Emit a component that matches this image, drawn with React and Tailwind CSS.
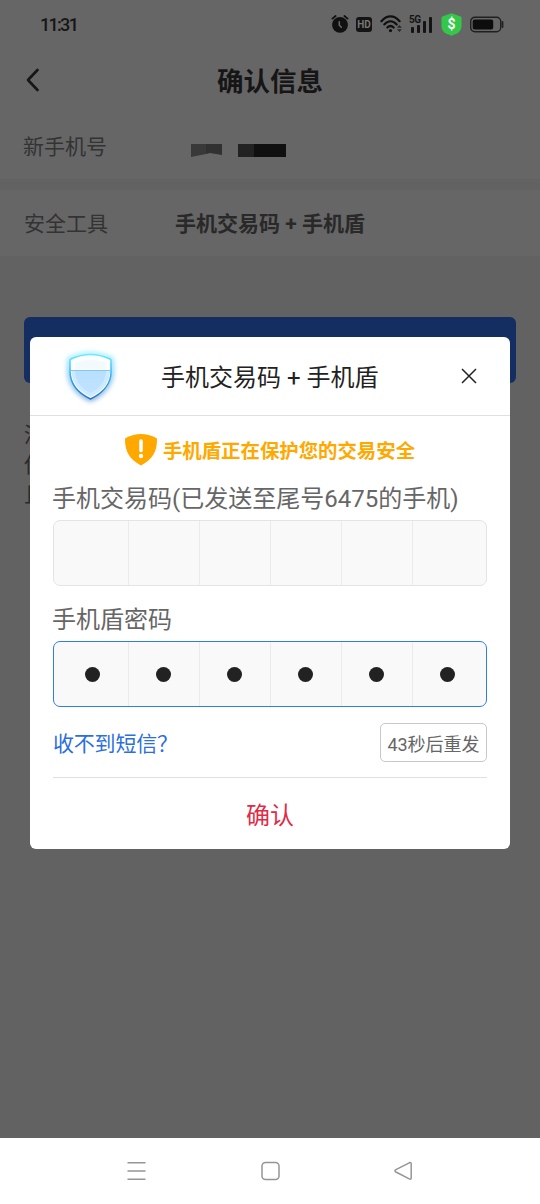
import React from 'react';

const SIGNAL_BARS = [
  'h-[6px]',
  'h-[8px]',
  'h-[12px]',
  'h-[16px]',
];

function AlarmIcon() {
  return (
    <svg className="h-[18px] w-[18px]" viewBox="0 0 18 18" fill="none">
      <circle cx="9" cy="9.8" r="7.9" fill="#101010" />
      <path d="M1.4 3.6 4.6 1M16.6 3.6 13.400 1" stroke="#101010" strokeWidth="1.800" strokeLinecap="round" />
      <path d="M8.300 6.800v3.400l2 2" stroke="#666" strokeWidth="1.600" strokeLinecap="round" />
    </svg>
  );
}

function WifiIcon() {
  return (
    <svg className="h-[18px] w-[23px]" viewBox="0 0 23 18" fill="none" stroke="#101010" strokeWidth="2.200" strokeLinecap="round">
      <path d="M1.400 6.200C7-.200 14-.200 19.600 6.200" />
      <path d="M4.300 9.400c3.800-4.200 8.600-4.200 12.400 0" />
      <path d="M7.300 12.500c2.100-2 4.300-2 6.400 0" />
      <circle cx="10.500" cy="15.600" r="1.600" fill="#101010" stroke="none" />
      <path d="m17 12.800 2.400-2.800 2.400 2.800ZM17 14.200l2.400 2.800 2.400-2.800Z" fill="#282828" stroke="none" />
    </svg>
  );
}

function GreenShieldIcon() {
  return (
    <svg className="h-[23px] w-[21px]" viewBox="0 0 21 23">
      <path d="M10.500.3 19.600 3.600q.9.400.9 1.400v8.200c0 3.600-2 5.600-4.600 7.300l-5.400 2.300-5.400-2.300C2.500 18.800.5 16.800.5 13.200V5q0-1 .9-1.400Z" fill="#34c84a" />
      <text x="10.500" y="16.300" textAnchor="middle" fontFamily="Roboto" fontWeight="700" fontSize="14" fill="#fff">$</text>
    </svg>
  );
}

function BatteryIcon() {
  return (
    <svg className="h-[17px] w-[35px]" viewBox="0 0 35 17" fill="none">
      <rect x=".7" y="1.200" width="30" height="14.600" rx="4.200" stroke="#202020" strokeWidth="1.400" />
      <rect x="2.700" y="3.400" width="20.500" height="10.200" rx="2" fill="#0d0d0d" />
      <path d="M32.500 6v5" stroke="#202020" strokeWidth="1.800" strokeLinecap="round" />
    </svg>
  );
}

function StatusBar() {
  return (
    <div className="flex h-[48px] items-center justify-between pl-[40px] pr-[35px]">
      <span className="font-['Roboto',sans-serif] text-[18px] font-medium tracking-[-1.7px] text-[#161616]">11:31</span>
      <div className="flex items-center">
        <AlarmIcon />
        <span className="ml-[7px] flex h-[15px] w-[16px] items-center justify-center rounded-[3px] bg-[#141414] font-['Roboto',sans-serif] text-[10px] font-bold text-[#777]">
          HD
        </span>
        <div className="ml-[8px]">
          <WifiIcon />
        </div>
        <div className="relative ml-[7px] mr-[1px] flex h-[17px] w-[22px] items-end justify-end gap-[3px]">
          <span className="absolute -left-[1px] -top-[1px] font-['Roboto',sans-serif] text-[10px] leading-[10px] font-bold tracking-[-0.5px] text-[#141414]">5G</span>
          {SIGNAL_BARS.map((height) => (
            <span key={height} className={`w-[3px] rounded-[1px] bg-[#141414] ${height}`} />
          ))}
        </div>
        <div className="ml-[8px]">
          <GreenShieldIcon />
        </div>
        <div className="ml-[8px]">
          <BatteryIcon />
        </div>
      </div>
    </div>
  );
}

function DialogShield() {
  return (
    <svg className="h-[62px] w-[62px]" viewBox="0 0 62 62" fill="none">
      <defs>
        <filter id="glow" x="-30%" y="-30%" width="160%" height="160%">
          <feGaussianBlur stdDeviation="2.600" />
        </filter>
        <linearGradient id="edge" x1="0" y1="0" x2="0" y2="1">
          <stop offset="0" stopColor="#6ce8ff" />
          <stop offset=".4" stopColor="#3cb5f2" />
          <stop offset="1" stopColor="#2674c4" />
        </linearGradient>
        <linearGradient id="water" x1="0" y1="0" x2="0" y2="1">
          <stop offset="0" stopColor="#b5e0ff" />
          <stop offset="1" stopColor="#c2e2ff" />
        </linearGradient>
      </defs>
      <path d="M9.500 14.500Q30.500 4 51.500 14.500V26C51.500 39 42 49 30.500 54 19 49 9.500 39 9.500 26Z" stroke="url(#edge)" strokeWidth="4.500" filter="url(#glow)" opacity=".65" />
      <path d="M10 15.500q0-1 1-1.500 19.500-9 39 0 1 .5 1 1.500V26C51.500 39 42 48.500 30.500 54 19 48.500 10 39 10 26Z" fill="#fbfeff" stroke="url(#edge)" strokeWidth="1.500" />
      <path d="M11.500 25.500h38.500C50 38 41.500 46.500 30.500 52 19.500 46.500 11.500 38 11.500 25.500Z" fill="#cdeaff" />
      <path d="M15 25.500h31C46 36.500 39.500 43.500 30.500 48 21.500 43.500 15 36.500 15 25.500Z" fill="url(#water)" />
      <path d="M15.500 24v-6q15-6 30 0v6" fill="#f2fafe" />
      <path d="M11 25.500h39.500" stroke="#84c4f6" />
    </svg>
  );
}

function WarningShield() {
  return (
    <svg className="h-[32px] w-[32px]" viewBox="0 0 32 32">
      <path d="M.7 4Q16-4 31.300 4q.7.400.7 1.300C32 18 27.500 25 16 31.500 4.500 25 0 18 0 5.300Q0 4.400.7 4Z" fill="#ffa800" />
      <path d="M16 7v9.500" stroke="#fff" strokeWidth="3.600" strokeLinecap="round" />
      <circle cx="16" cy="22" r="2.200" fill="#fff" />
    </svg>
  );
}

function CodeInput({ filled }) {
  return (
    <div className={`flex h-[66px] overflow-hidden rounded-[7px] border-[1.5px] bg-[#f9f9f9] ${filled ? 'border-[#2f80dd]' : 'border-[#e4e4e4]'}`}>
      {[0, 1, 2, 3, 4, 5].map((i) => (
        <div
          key={i}
          className={`flex shrink-0 items-center justify-center ${i === 0 ? 'w-[74px] pl-[3px]' : 'border-l border-[#ebebeb]'} ${i === 5 ? 'w-[74px] pr-[4px]' : 'w-[71px] pr-[1px]'}`}
        >
          {filled && <span className="h-[15px] w-[15px] rounded-full bg-[#222]" />}
        </div>
      ))}
    </div>
  );
}

function ConfirmDialog() {
  return (
    <div className="absolute left-[30px] top-[337px] h-[512px] w-[480px] rounded-[6px] bg-white">
      <div className="flex h-[79px] items-center border-b border-[#e0e0e0] pl-[30px] pr-[33px]">
        <DialogShield />
        <h2 className="ml-[39px] grow whitespace-nowrap pt-[4px] text-[24px] text-[#222]">手机交易码 + 手机盾</h2>
        <svg className="h-[16px] w-[16px]" viewBox="0 0 16 16" stroke="#222" strokeWidth="1.500">
          <path d="m1 1 14 14M15 1 1 15" />
        </svg>
      </div>
      <div className="px-[23px]">
        <div className="mt-[18px] flex h-[32px] items-center justify-center gap-[6px] text-[19.4px] font-bold text-[#ffa800]">
          <WarningShield />
          <span className="pt-[4px]">手机盾正在保护您的交易安全</span>
        </div>
        <p className="-ml-px mt-[15px] h-[39px] whitespace-nowrap text-[24px] leading-[36px] text-[#666]">手机交易码(已发送至尾号6475的手机)</p>
        <CodeInput />
        <p className="-ml-px mt-[16px] h-[39px] text-[24px] leading-[36px] text-[#666]">手机盾密码</p>
        <CodeInput filled />
        <div className="mt-[16px] flex h-[39px] items-center justify-between">
          <span className="pt-[5px] text-[21px] tracking-[-0.2px] text-[#2b6fdd]">收不到短信？</span>
          <button className="h-[39px] w-[107px] whitespace-nowrap rounded-[5px] border-[1.5px] border-[#c8c8c8] pt-[3px] text-[18px] text-[#666]">43秒后重发</button>
        </div>
        <button className="mt-[15px] h-[71px] w-full border-t border-[#e0e0e0] pt-[5px] text-[24px] text-[#e02b48]">确认</button>
      </div>
    </div>
  );
}

function NavBar() {
  return (
    <div className="flex h-[66px] items-center bg-white pl-[127px]">
      <svg className="h-[20px] w-[286px]" viewBox="0 0 286 20" fill="none" stroke="#959595" strokeWidth="1.500">
        <path d="M.5 1.800h18M.5 10h18M.5 18.200h18" />
        <rect x="135" y="1.500" width="17" height="17" rx="3.500" />
        <path d="M282.300 1.800 268.900 8.600q-2 1.200 0 2.400l13.400 6.900q1.900.8 1.900-1.100V2.900q0-1.900-1.900-1.100Z" />
      </svg>
    </div>
  );
}

export default function App() {
  return (
    <div className="relative flex h-[1204px] w-[540px] flex-col overflow-hidden bg-[#626262] font-['Roboto','Noto_Sans_CJK_SC',sans-serif]">
      <div className="h-[179px] bg-[#666]">
        <StatusBar />
        <div className="grid h-[64px] grid-cols-3 items-center">
          <svg className="ml-[26px] h-[24px] w-[14px]" viewBox="0 0 14 24" fill="none" stroke="#161616" strokeWidth="2.600" strokeLinecap="round" strokeLinejoin="round">
            <path d="M11.500 2 2 12l9.500 10" />
          </svg>
          <h1 className="pt-[3px] text-center text-[26.5px] font-bold text-[#161616]">确认信息</h1>
        </div>
        <div className="flex h-[67px] items-center pl-[23px]">
          <span className="w-[168px] pt-[4px] text-[21px] text-[#333]">新手机号</span>
          <svg className="mt-[8px] h-[14px] w-[95px]" viewBox="0 0 95 14">
            <path d="M0 1h15v10L0 14Z" fill="#393939" />
            <path d="M15 1h16v11l-12-2-4 1Z" fill="#313131" />
            <path d="M47 1h16v13H47Z" fill="#222" />
            <path d="M63 1h32v13H63Z" fill="#101010" />
          </svg>
        </div>
      </div>
      <div className="mt-[11px] flex h-[66px] items-center bg-[#666] pl-[24px] pt-[4px] text-[21px]">
        <span className="w-[151px] text-[#333]">安全工具</span>
        <span className="font-bold text-[#292929]">手机交易码 + 手机盾</span>
      </div>
      <div className="mx-[24px] mt-[61px] h-[66px] rounded-[6px] bg-[#142e61]" />
      <div className="ml-[24px] mt-[37px] w-[21px] grow text-[21px] leading-[30px] text-[#292929]">
        没
        <br />
        使
        <br />
        且
      </div>
      <NavBar />
      <ConfirmDialog />
    </div>
  );
}
